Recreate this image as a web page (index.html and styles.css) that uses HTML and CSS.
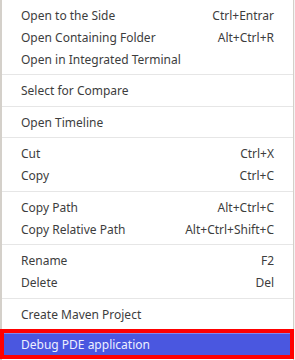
FILE: index.html
```html
<!DOCTYPE html>
<html lang="en">
<head>
    <meta charset="UTF-8">
    <meta name="viewport" content="width=device-width, initial-scale=1.0">
    <title>Context Menu</title>
    <link rel="stylesheet" href="styles.css">
</head>
<body>
    <div class="menu">
        <div class="menu-item"><span>Open to the Side</span><span class="keys">Ctrl+Entrar</span></div>
        <div class="menu-item"><span>Open Containing Folder</span><span class="keys">Alt+Ctrl+R</span></div>
        <div class="menu-item"><span>Open in Integrated Terminal</span></div>
        <div class="separator"></div>
        <div class="menu-item"><span>Select for Compare</span></div>
        <div class="separator"></div>
        <div class="menu-item"><span>Open Timeline</span></div>
        <div class="separator"></div>
        <div class="menu-item"><span>Cut</span><span class="keys">Ctrl+X</span></div>
        <div class="menu-item"><span>Copy</span><span class="keys">Ctrl+C</span></div>
        <div class="separator"></div>
        <div class="menu-item"><span>Copy Path</span><span class="keys">Alt+Ctrl+C</span></div>
        <div class="menu-item"><span>Copy Relative Path</span><span class="keys">Alt+Ctrl+Shift+C</span></div>
        <div class="separator"></div>
        <div class="menu-item"><span>Rename</span><span class="keys">F2</span></div>
        <div class="menu-item"><span>Delete</span><span class="keys">Del</span></div>
        <div class="separator"></div>
        <div class="menu-item"><span>Create Maven Project</span></div>
        <div class="menu-item active"><span>Debug PDE application</span></div>
    </div>
</body>
</html>
```

FILE: styles.css
```css
* {
    margin: 0;
    padding: 0;
    box-sizing: border-box;
}

body {
    font-family: "Noto Sans", "Open Sans", sans-serif;
    background-color: #f4f4f4;
    color: #3d3d3d;
    width: 295px;
    height: 360px;
    overflow: hidden;
}

.menu {
    width: 294px;
    background-color: #ffffff;
    border-left: 2px solid #d4d0ca;
    border-right: 1px solid #d4d0ca;
    padding-top: 4px;
    height: 360px;
}

.menu-item {
    display: flex;
    justify-content: space-between;
    align-items: center;
    height: 22px;
    padding: 0 19px;
    font-size: 12px;
    white-space: nowrap;
}

.separator {
    height: 1px;
    background-color: #e6e6e6;
    margin: 4px 0 4.5px;
}

.menu-item.active {
    margin: 8px 3px 0 2px;
    padding-left: 17px;
    background-color: #4a57e0;
    border-top: 1px solid #7e89ec;
    color: #eef0ff;
    outline: 4px solid #ff0000;
}
```
